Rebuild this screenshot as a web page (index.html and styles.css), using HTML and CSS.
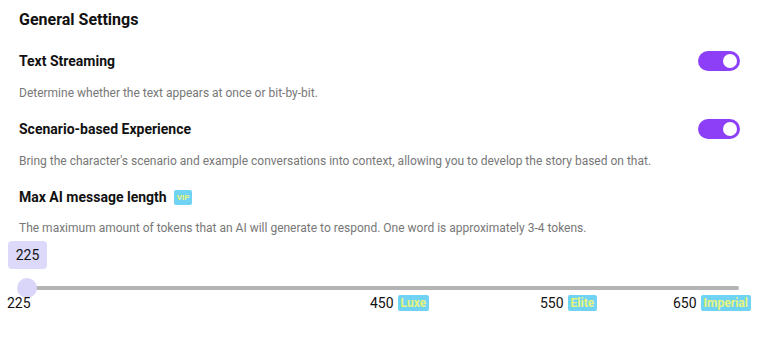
FILE: index.html
```html
<!DOCTYPE html>
<html>
<head>
<meta charset="utf-8">
<link rel="stylesheet" href="styles.css">
</head>
<body>
<div class="page">
  <h2 class="title">General Settings</h2>

  <div class="setting">
    <div class="row">
      <span class="label">Text Streaming</span>
      <span class="toggle"><span class="knob"></span></span>
    </div>
    <p class="desc">Determine whether the text appears at once or bit-by-bit.</p>
  </div>

  <div class="setting">
    <div class="row">
      <span class="label">Scenario-based Experience</span>
      <span class="toggle"><span class="knob"></span></span>
    </div>
    <p class="desc">Bring the character's scenario and example conversations into context, allowing you to develop the story based on that.</p>
  </div>

  <div class="setting setting-slider">
    <div class="row">
      <span class="label">Max AI message length <span class="badge badge-vip">VIP</span></span>
    </div>
    <p class="desc desc-tight">The maximum amount of tokens that an AI will generate to respond. One word is approximately 3-4 tokens.</p>
  </div>

  <div class="slider">
    <div class="bubble">225</div>
    <div class="track-wrap">
      <div class="track"></div>
      <div class="thumb"></div>
    </div>
    <div class="marks">
      <span class="mark mark-min">225</span>
      <span class="mark mark-luxe">450 <span class="badge">Luxe</span></span>
      <span class="mark mark-elite">550 <span class="badge">Elite</span></span>
      <span class="mark mark-imp">650 <span class="badge">Imperial</span></span>
    </div>
  </div>
</div>
</body>
</html>
```

FILE: styles.css
```css
* { box-sizing: border-box; }
html, body { margin: 0; padding: 0; background: #fff; }
body {
  font-family: Roboto, "Liberation Sans", sans-serif;
  color: #111;
  width: 758px;
  height: 346px;
  overflow: hidden;
}
.page {
  padding: 10px 18px 0 19px;
}
.title {
  margin: 0;
  font-size: 16px;
  font-weight: 700;
  line-height: 20px;
  color: #111;
}
.setting { margin-top: 21px; }
.setting + .setting { margin-top: 18px; }
.setting-slider.setting { margin-top: 18px; }
.row {
  display: flex;
  align-items: center;
  justify-content: space-between;
  height: 20px;
}
.label {
  font-size: 14px;
  font-weight: 700;
  color: #111;
  display: flex;
  align-items: center;
  gap: 7px;
}
.desc {
  margin: 14px 0 0;
  font-size: 12px;
  line-height: 16px;
  color: #777;
}
.desc-tight { margin-top: 13px; }
.toggle {
  width: 42px;
  height: 20px;
  border-radius: 10px;
  background: #8c3ff7;
  display: flex;
  align-items: center;
  justify-content: flex-end;
  padding-right: 3px;
}
.knob {
  width: 14px;
  height: 14px;
  border-radius: 50%;
  background: #fff;
}
.badge {
  display: inline-block;
  background: #70d3f4;
  color: #e6f47c;
  font-size: 12px;
  font-weight: 700;
  line-height: 16px;
  padding: 0 3px;
  border-radius: 2px;
}
.badge-vip {
  font-size: 8px;
  line-height: 15px;
  padding: 0 3px;
}
.slider {
  margin: 5px 0 0 -11px;
  width: 732px;
}
.bubble {
  width: 39px;
  height: 28px;
  background: #dcd9fb;
  border-radius: 4px;
  font-size: 14px;
  display: flex;
  align-items: center;
  justify-content: center;
  color: #111;
  font-weight: 400;
}
.track-wrap {
  position: relative;
  height: 20px;
  margin-top: 9px;
}
.track {
  position: absolute;
  left: 19px;
  right: 1px;
  top: 8px;
  height: 4px;
  border-radius: 2px;
  background: #b4b4b4;
}
.thumb {
  position: absolute;
  left: 9px;
  top: 0;
  width: 20px;
  height: 20px;
  border-radius: 50%;
  background: #d9d6fa;
}
.marks {
  position: relative;
  height: 20px;
  margin-top: -4px;
  font-size: 14px;
  color: #111;
}
.mark {
  position: absolute;
  top: 0;
  display: flex;
  align-items: center;
  gap: 4px;
  white-space: nowrap;
  line-height: 18px;
}
.mark-min { left: -1px; }
.mark-luxe { left: 362px; }
.mark-elite { left: 532px; }
.mark-imp { left: 665px; }
```
